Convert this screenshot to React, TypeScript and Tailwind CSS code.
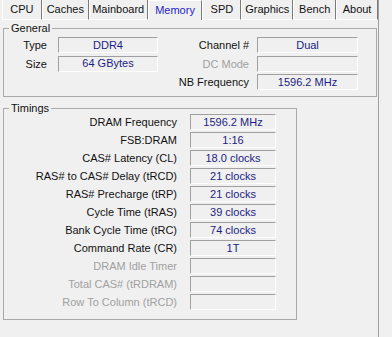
import React from "react";

// Tabs with their measured widths (px) so separators land where CPU-Z draws them
const tabs = [
  { name: "CPU", w: 40 },
  { name: "Caches", w: 47 },
  { name: "Mainboard", w: 59 },
  { name: "Memory", w: 55 },
  { name: "SPD", w: 39 },
  { name: "Graphics", w: 52 },
  { name: "Bench", w: 43 },
  { name: "About", w: 42 },
];

interface TimingRow {
  label: string;
  value?: string;
  disabled?: boolean;
}

const timings: TimingRow[] = [
  { label: "DRAM Frequency", value: "1596.2 MHz" },
  { label: "FSB:DRAM", value: "1:16" },
  { label: "CAS# Latency (CL)", value: "18.0 clocks" },
  { label: "RAS# to CAS# Delay (tRCD)", value: "21 clocks" },
  { label: "RAS# Precharge (tRP)", value: "21 clocks" },
  { label: "Cycle Time (tRAS)", value: "39 clocks" },
  { label: "Bank Cycle Time (tRC)", value: "74 clocks" },
  { label: "Command Rate (CR)", value: "1T" },
  { label: "DRAM Idle Timer", disabled: true },
  { label: "Total CAS# (tRDRAM)", disabled: true },
  { label: "Row To Column (tRCD)", disabled: true },
];

// Sunken read-only field
const Field = ({ value, className = "" }: { value?: string; className?: string }) => (
  <div
    className={`h-[16px] flex items-center justify-center border-t border-l border-t-[#a0a0a0] border-l-[#a0a0a0] border-b border-r border-b-white border-r-white text-[#1c1c84] leading-none ${className}`}
  >
    {value}
  </div>
);

// Group box with caption laid over its top border
const GroupBox = ({
  title,
  className = "",
  children,
}: {
  title: string;
  className?: string;
  children: React.ReactNode;
}) => (
  <div className={`relative border border-[#a9a9a9] ${className}`}>
    <span className="absolute left-[5px] -top-[7px] px-[2px] bg-[#f0f0f0] leading-[12px] text-[#111]">
      {title}
    </span>
    {children}
  </div>
);

export default function App() {
  return (
    <div
      className="w-[392px] h-[337px] bg-[#f0f0f0] text-[11px] text-[#111] overflow-hidden"
      style={{ fontFamily: '"Liberation Sans", Arial, sans-serif' }}
    >
      {/* Tab strip */}
      <div className="flex h-[20px] pl-[2px] w-[379px] border-r border-[#a0a0a0]">
        {tabs.map((t) => {
          const active = t.name === "Memory";
          return (
            <div
              key={t.name}
              style={{ width: t.w }}
              className={
                active
                  ? "h-[20px] flex items-center justify-center border-l border-white border-r border-r-[#7a7a7a] border-t border-t-white text-[#2424c4]"
                  : "h-[20px] flex items-center justify-center border-l border-white border-r border-r-[#7a7a7a] border-b border-b-white"
              }
            >
              {t.name}
            </div>
          );
        })}
      </div>

      {/* Tab page */}
      <div className="w-[379px] h-[317px] border-r border-[#a0a0a0] pl-[3px] pt-[8px]">
        <GroupBox title="General" className="w-[374px] h-[69px]">
          <div className="pt-[8px] flex flex-col gap-[2px]">
            <div className="flex items-center">
              <div className="w-[43px] text-right">Type</div>
              <Field value="DDR4" className="ml-[11px] w-[100px]" />
              <div className="w-[91px] text-right">Channel #</div>
              <Field value="Dual" className="ml-[8px] w-[101px]" />
            </div>
            <div className="flex items-center">
              <div className="w-[43px] text-right">Size</div>
              <Field value="64 GBytes" className="ml-[11px] w-[100px]" />
              <div className="w-[91px] text-right text-[#a0a0a0]">DC Mode</div>
              <Field className="ml-[8px] w-[101px]" />
            </div>
            <div className="flex items-center">
              <div className="w-[245px] text-right">NB Frequency</div>
              <Field value="1596.2 MHz" className="ml-[8px] w-[101px]" />
            </div>
          </div>
        </GroupBox>

        <GroupBox title="Timings" className="mt-[11px] w-[294px] h-[212px]">
          <div className="pt-[5px] flex flex-col gap-[2px]">
            {timings.map((r) => (
              <div key={r.label} className="flex items-center">
                <div
                  className={`w-[173px] text-right leading-[16px] ${
                    r.disabled ? "text-[#a0a0a0]" : "text-[#111]"
                  }`}
                >
                  {r.label}
                </div>
                <Field value={r.value} className="ml-[13px] w-[86px]" />
              </div>
            ))}
          </div>
        </GroupBox>
      </div>
    </div>
  );
}
